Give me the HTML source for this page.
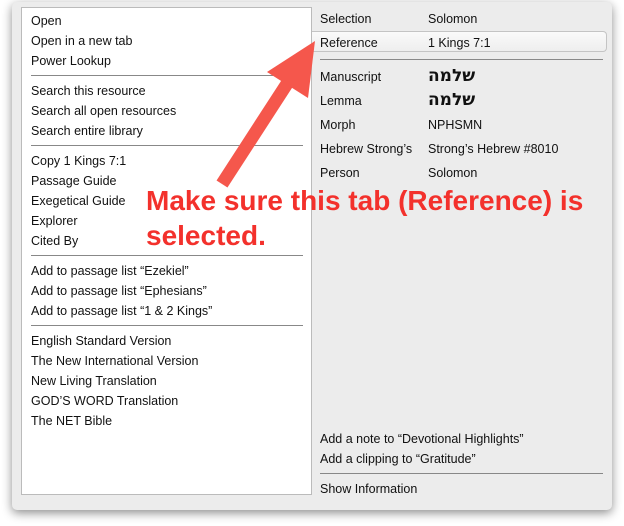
<!DOCTYPE html>
<html><head><style>
body{margin:0;width:624px;height:526px;background:#fff;position:relative;overflow:hidden;font-family:"Liberation Sans","DejaVu Sans",sans-serif;font-size:12.5px;color:#111}
.win{position:absolute;left:12px;top:2px;width:600px;height:508px;background:#ececec;border-radius:5px;box-shadow:0 3px 10px rgba(0,0,0,.45)}
.left{position:absolute;left:21px;top:7px;width:291px;height:488px;background:#fff;border:1px solid #bbb;box-sizing:border-box}
.t{position:absolute;white-space:nowrap;line-height:20px;top:1px}
.sep{position:absolute;height:1px;background:#888}
.hl{position:absolute;left:312px;top:31px;width:295px;height:21px;background:linear-gradient(#fafafa,#eee);border:1px solid #c4c4c4;border-left:none;border-radius:0 4px 4px 0;box-sizing:border-box}
.heb{font-family:"DejaVu Sans",sans-serif;font-size:17px;font-weight:bold}
.red{position:absolute;left:146px;color:#f3312c;font-weight:bold;font-size:28px;white-space:nowrap;line-height:30px}
</style></head><body>
<div class="win"></div>
<div class="left"></div>
<div class="hl"></div>
<div class="t" style="left:31px;top:11px">Open</div>
<div class="t" style="left:31px;top:31px">Open in a new tab</div>
<div class="t" style="left:31px;top:51px">Power Lookup</div>
<div class="sep" style="left:31px;top:75px;width:272px"></div>
<div class="t" style="left:31px;top:81px">Search this resource</div>
<div class="t" style="left:31px;top:101px">Search all open resources</div>
<div class="t" style="left:31px;top:121px">Search entire library</div>
<div class="sep" style="left:31px;top:145px;width:272px"></div>
<div class="t" style="left:31px;top:151px">Copy 1 Kings 7:1</div>
<div class="t" style="left:31px;top:171px">Passage Guide</div>
<div class="t" style="left:31px;top:191px">Exegetical Guide</div>
<div class="t" style="left:31px;top:211px">Explorer</div>
<div class="t" style="left:31px;top:231px">Cited By</div>
<div class="sep" style="left:31px;top:255px;width:272px"></div>
<div class="t" style="left:31px;top:261px">Add to passage list “Ezekiel”</div>
<div class="t" style="left:31px;top:281px">Add to passage list “Ephesians”</div>
<div class="t" style="left:31px;top:301px">Add to passage list “1 &amp; 2 Kings”</div>
<div class="sep" style="left:31px;top:325px;width:272px"></div>
<div class="t" style="left:31px;top:331px">English Standard Version</div>
<div class="t" style="left:31px;top:351px">The New International Version</div>
<div class="t" style="left:31px;top:371px">New Living Translation</div>
<div class="t" style="left:31px;top:391px">GOD’S WORD Translation</div>
<div class="t" style="left:31px;top:411px">The NET Bible</div>

<div class="t" style="left:320px;top:9px">Selection</div><div class="t" style="left:428px;top:9px">Solomon</div>
<div class="t" style="left:320px;top:33px">Reference</div><div class="t" style="left:428px;top:33px">1 Kings 7:1</div>
<div class="sep" style="left:320px;top:59px;width:283px"></div>
<div class="t" style="left:320px;top:67px">Manuscript</div><div class="t heb" style="left:428px;top:66px">שלמה</div>
<div class="t" style="left:320px;top:91px">Lemma</div><div class="t heb" style="left:428px;top:90px">שלמה</div>
<div class="t" style="left:320px;top:115px">Morph</div><div class="t" style="left:428px;top:115px">NPHSMN</div>
<div class="t" style="left:320px;top:139px">Hebrew Strong’s</div><div class="t" style="left:428px;top:139px">Strong’s Hebrew #8010</div>
<div class="t" style="left:320px;top:163px">Person</div><div class="t" style="left:428px;top:163px">Solomon</div>
<div class="t" style="left:320px;top:429px">Add a note to “Devotional Highlights”</div>
<div class="t" style="left:320px;top:449px">Add a clipping to “Gratitude”</div>
<div class="sep" style="left:320px;top:473px;width:283px"></div>
<div class="t" style="left:320px;top:479px">Show Information</div>

<svg style="position:absolute;left:0;top:0" width="624" height="526">
<line x1="222" y1="184" x2="292" y2="76" stroke="#f5574c" stroke-width="13"/>
<polygon points="315,41 267,72 308,98" fill="#f5574c"/>
</svg>
<div class="red" style="top:186px">Make sure this tab (Reference) is</div>
<div class="red" style="top:221px">selected.</div>
</body></html>
